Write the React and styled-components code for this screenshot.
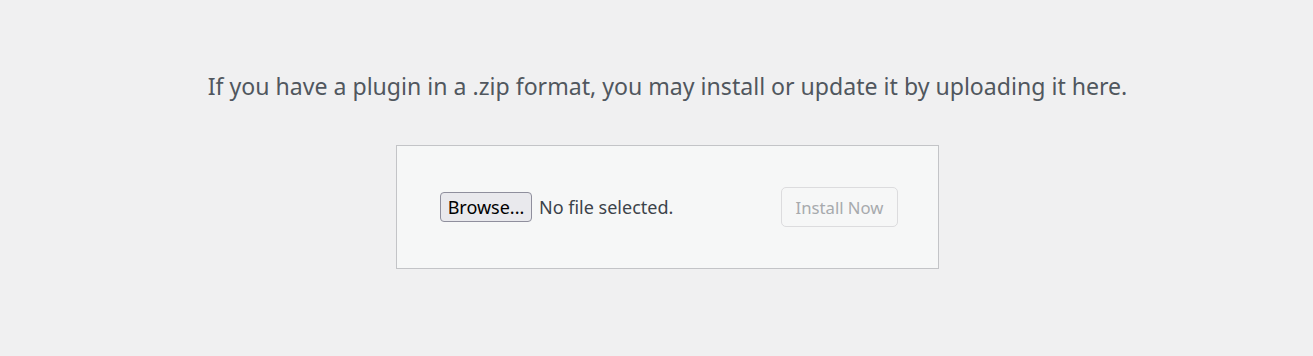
import styled, { createGlobalStyle } from "styled-components";

const GlobalStyle = createGlobalStyle`
  html, body {
    margin: 0;
    padding: 0;
    background: #f0f0f1;
  }
  body {
    font-family: "Noto Sans", "Open Sans", sans-serif;
    color: #3c434a;
  }
`;

const Page = styled.div`
  display: flex;
  flex-direction: column;
  align-items: center;
  padding: 70px 0 0 22px;
  height: 356px;
  box-sizing: border-box;
`;

const Help = styled.p`
  margin: 0;
  font-size: 23.1px;
  line-height: 32px;
  color: #50575e;
`;

const UploadForm = styled.form`
  margin-top: 43px;
  width: 543px;
  height: 124px;
  box-sizing: border-box;
  background: #f6f7f7;
  border: 1px solid #c3c4c7;
  display: flex;
  align-items: center;
  justify-content: space-between;
  padding: 0 40px 0 43px;
`;

const FilePicker = styled.label`
  display: flex;
  align-items: center;
  gap: 7px;
  font-size: 18px;
  color: #3c434a;
`;

const BrowseButton = styled.span`
  display: inline-flex;
  align-items: center;
  justify-content: center;
  width: 92px;
  height: 30px;
  box-sizing: border-box;
  border: 1px solid #8f8f9d;
  border-radius: 4px;
  background: #e9e9ed;
  color: #000;
  font-size: 18px;
`;

const InstallButton = styled.button`
  width: 117px;
  height: 40px;
  box-sizing: border-box;
  border: 1px solid #dcdcde;
  border-radius: 5px;
  background: #f6f7f7;
  color: #a7aaad;
  font-family: inherit;
  font-size: 16.7px;
  cursor: default;
`;

const App = () => {
  return (
    <>
      <GlobalStyle />
      <Page>
        <Help>
          If you have a plugin in a .zip format, you may install or update it by
          uploading it here.
        </Help>
        <UploadForm onSubmit={(e) => e.preventDefault()}>
          <FilePicker>
            <BrowseButton>Browse...</BrowseButton>
            No file selected.
          </FilePicker>
          <InstallButton type="submit" disabled>
            Install Now
          </InstallButton>
        </UploadForm>
      </Page>
    </>
  );
};

export default App;
